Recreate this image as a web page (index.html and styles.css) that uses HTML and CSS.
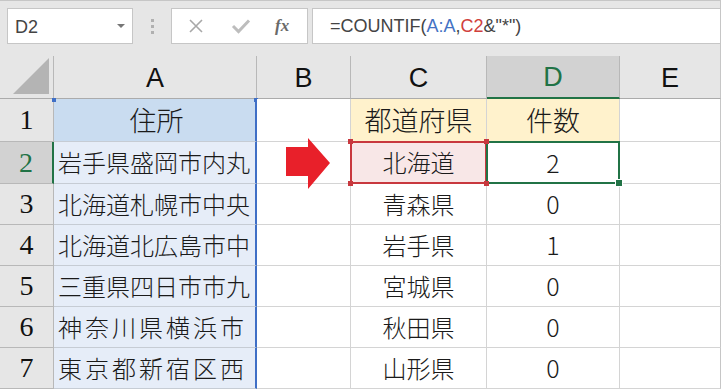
FILE: index.html
```html
<!DOCTYPE html>
<html lang="ja">
<head>
<meta charset="utf-8">
<link rel="stylesheet" href="styles.css">
</head>
<body>
<div class="app">
  <div class="toolbar">
    <div class="namebox">
      <span class="name">D2</span>
      <span class="caret"></span>
    </div>
    <div class="grip"><i></i><i></i><i></i></div>
    <div class="fbtns">
      <svg class="ico" width="18" height="18" viewBox="0 0 18 18"><path d="M3 3 L15 15 M15 3 L3 15" stroke="#a8a8a8" stroke-width="1.6" fill="none"/></svg>
      <svg class="ico" width="20" height="18" viewBox="0 0 20 18"><path d="M2 9 L7.5 14.5 L18 3.5" stroke="#bdbdbd" stroke-width="3" fill="none"/></svg>
      <span class="fx">fx</span>
    </div>
    <div class="finput">
      <span class="ftext">=COUNTIF(<span class="ref-a">A:A</span>,<span class="ref-c">C2</span>&amp;"*")</span>
    </div>
  </div>

  <div class="sheet">
    <div class="corner"><svg width="37" height="37" viewBox="0 0 37 37"><polygon points="0,36 36,36 36,0" fill="#b4b4b4"/></svg></div>
    <div class="ch">A</div>
    <div class="ch">B</div>
    <div class="ch">C</div>
    <div class="ch ch-sel">D</div>
    <div class="ch ch-last">E</div>

    <div class="rh">1</div>
    <div class="c ca ca-head big">住所</div>
    <div class="c"></div>
    <div class="c cc yel big">都道府県</div>
    <div class="c cc yel big">件数</div>
    <div class="c ce"></div>

    <div class="rh rh-sel">2</div>
    <div class="c ca">岩手県盛岡市内丸</div>
    <div class="c"></div>
    <div class="c cc red-ref">北海道</div>
    <div class="c cc num active">2</div>
    <div class="c ce"></div>

    <div class="rh">3</div>
    <div class="c ca">北海道札幌市中央</div>
    <div class="c"></div>
    <div class="c cc">青森県</div>
    <div class="c cc num">0</div>
    <div class="c ce"></div>

    <div class="rh">4</div>
    <div class="c ca">北海道北広島市中</div>
    <div class="c"></div>
    <div class="c cc">岩手県</div>
    <div class="c cc num">1</div>
    <div class="c ce"></div>

    <div class="rh">5</div>
    <div class="c ca">三重県四日市市九</div>
    <div class="c"></div>
    <div class="c cc">宮城県</div>
    <div class="c cc num">0</div>
    <div class="c ce"></div>

    <div class="rh">6</div>
    <div class="c ca spread">神奈川県横浜市</div>
    <div class="c"></div>
    <div class="c cc">秋田県</div>
    <div class="c cc num">0</div>
    <div class="c ce"></div>

    <div class="rh">7</div>
    <div class="c ca spread">東京都新宿区西</div>
    <div class="c"></div>
    <div class="c cc">山形県</div>
    <div class="c cc num">0</div>
    <div class="c ce"></div>
  </div>

  <svg class="arrow" width="46" height="52" viewBox="0 0 46 52"><polygon points="0,9 22,9 22,0 44,25 22,51 22,38 0,38" fill="#e8202a"/></svg>
</div>
</body>
</html>
```

FILE: styles.css
```css
* { box-sizing: border-box; }
html, body { margin: 0; padding: 0; background: #ffffff; }
body { width: 723px; height: 391px; overflow: hidden; }

.app {
  position: relative;
  width: 721px;
  font-family: "Noto Sans CJK JP", sans-serif;
}

/* formula bar */
.toolbar {
  height: 56px;
  background: #e6e6e6;
  border-top: 1px solid #c6c6c6;
  border-right: 1px solid #c6c6c6;
  display: flex;
  align-items: flex-start;
  padding-top: 7px;
  padding-left: 7px;
}
.namebox {
  width: 126px;
  height: 36px;
  background: #fff;
  border: 1px solid #c6c6c6;
  display: flex;
  align-items: center;
  justify-content: space-between;
  padding: 0 7px 0 7px;
}
.name {
  font-family: "Liberation Sans", Arial, sans-serif;
  font-size: 18px;
  color: #444;
  padding-top: 2px;
}
.caret {
  width: 0; height: 0;
  border-left: 4px solid transparent;
  border-right: 4px solid transparent;
  border-top: 4px solid #767676;
}
.grip {
  width: 38px;
  height: 36px;
  display: flex;
  flex-direction: column;
  align-items: center;
  justify-content: center;
  gap: 3px;
}
.grip i {
  display: block;
  width: 3px; height: 3px;
  background: #b0b0b0;
}
.fbtns {
  width: 137px;
  height: 36px;
  background: #fff;
  border: 1px solid #c6c6c6;
  display: flex;
  align-items: center;
  padding-left: 15px;
  gap: 26px;
}
.fx {
  font-family: "Liberation Serif", serif;
  font-style: italic;
  font-weight: bold;
  font-size: 17px;
  color: #6a6a6a;
  margin-left: -2px;
}
.finput {
  flex: 1;
  height: 36px;
  margin-left: 4px;
  background: #fff;
  border: 1px solid #c6c6c6;
  border-right: none;
  display: flex;
  align-items: center;
  padding-left: 17px;
}
.ftext {
  font-family: "Liberation Sans", Arial, sans-serif;
  font-size: 18px;
  color: #444;
}
.ref-a { color: #4472c4; }
.ref-c { color: #d0403c; }

/* sheet grid */
.sheet {
  display: grid;
  grid-template-columns: 54px 203px 94px 136px 133px 101px;
  grid-template-rows: 43px 43px 42px 41px 41px 41px 41px 41px;
}
.corner, .ch, .rh {
  background: #e6e6e6;
  border-right: 1px solid #b8b8b8;
  border-bottom: 1px solid #ababab;
}
.corner {
  display: flex;
  align-items: flex-end;
  justify-content: flex-end;
  padding: 0 3px 3px 0;
}
.ch {
  display: flex;
  align-items: center;
  justify-content: center;
  font-family: "Liberation Sans", Arial, sans-serif;
  font-size: 27px;
  color: #111;
  padding-top: 2px;
}
.ch-sel {
  background: #d2d2d2;
  border-bottom: 2px solid #217346;
  color: #217346;
}
.ch-last { border-right: 1px solid #c6c6c6; }
.rh {
  display: flex;
  align-items: center;
  justify-content: center;
  font-family: "Liberation Serif", serif;
  font-size: 28px;
  color: #111;
  border-bottom-color: #b8b8b8;
}
.rh-sel {
  background: #d2d2d2;
  color: #217346;
  border-right: 2px solid #217346;
}

.c {
  position: relative;
  background: #fff;
  border-right: 1px solid #d4d4d4;
  border-bottom: 1px solid #d4d4d4;
  display: flex;
  align-items: center;
  font-size: 24px;
  font-weight: 300;
  color: #1a1a1a;
  white-space: nowrap;
  overflow: visible;
}
.big { font-size: 27px; }
.ca {
  background: #e6edf8;
  border-right: 2px solid #3f6fc6;
  border-bottom-color: #c6ccd4;
  padding-left: 4px;
  padding-bottom: 2px;
}
.spread { letter-spacing: 3px; }
.ca-head {
  background: #c9dcf0;
  justify-content: center;
}
.ca-head::before, .ca-head::after {
  content: "";
  position: absolute;
  top: -1px;
  width: 4px; height: 4px;
  background: #3f6fc6;
}
.ca-head::before { left: -2px; }
.ca-head::after { right: -3px; }
.cc { justify-content: center; padding-bottom: 2px; }
.yel { background: #fff2cc; }
.num {
  font-family: "Noto Sans CJK JP", sans-serif;
  font-size: 25px;
  font-weight: 300;
}
.ce { border-right: 1px solid #c6c6c6; }

.red-ref { background: #f8e7e7; }
.red-ref::after {
  content: "";
  position: absolute;
  top: -1px; left: -1px; right: -1px; bottom: -1px;
  border: 2px solid #c8383e;
}
.red-ref::before {
  content: "";
  position: absolute;
  top: -3px; left: -3px; right: -3px; bottom: -3px;
  background:
    linear-gradient(#c8383e, #c8383e) left top / 5px 5px no-repeat,
    linear-gradient(#c8383e, #c8383e) right top / 5px 5px no-repeat,
    linear-gradient(#c8383e, #c8383e) left bottom / 5px 5px no-repeat,
    linear-gradient(#c8383e, #c8383e) right bottom / 5px 5px no-repeat;
  z-index: 1;
}
.active::after {
  content: "";
  position: absolute;
  top: -1px; left: -1px; right: -1px; bottom: -1px;
  border: 2px solid #217346;
}
.active::before {
  content: "";
  position: absolute;
  right: -4px; bottom: -4px;
  width: 6px; height: 6px;
  background: #217346;
  border: 1px solid #fff;
  z-index: 2;
}

.arrow {
  position: absolute;
  left: 286px;
  top: 138px;
}
```
